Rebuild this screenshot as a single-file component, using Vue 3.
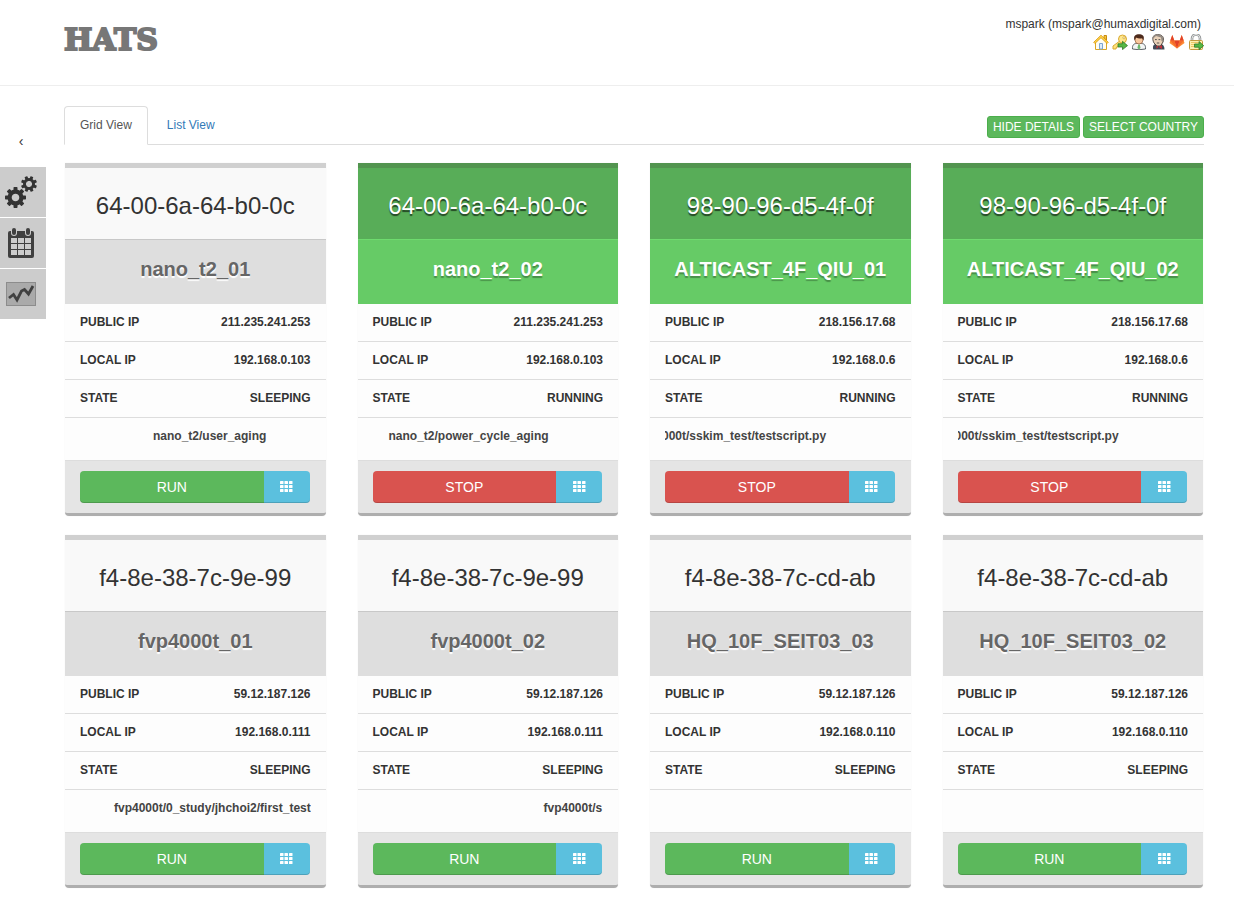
<script setup>
const cards = [
  { mac: '64-00-6a-64-b0-0c', name: 'nano_t2_01', publicIp: '211.235.241.253', localIp: '192.168.0.103', running: false, script: 'nano_t2/user_aging', scroll: 73 },
  { mac: '64-00-6a-64-b0-0c', name: 'nano_t2_02', publicIp: '211.235.241.253', localIp: '192.168.0.103', running: true, script: 'nano_t2/power_cycle_aging', scroll: 16 },
  { mac: '98-90-96-d5-4f-0f', name: 'ALTICAST_4F_QIU_01', publicIp: '218.156.17.68', localIp: '192.168.0.6', running: true, script: '000t/sskim_test/testscript.py', scroll: -3 },
  { mac: '98-90-96-d5-4f-0f', name: 'ALTICAST_4F_QIU_02', publicIp: '218.156.17.68', localIp: '192.168.0.6', running: true, script: '000t/sskim_test/testscript.py', scroll: -3 },
  { mac: 'f4-8e-38-7c-9e-99', name: 'fvp4000t_01', publicIp: '59.12.187.126', localIp: '192.168.0.111', running: false, script: 'fvp4000t/0_study/jhchoi2/first_test', scroll: 34 },
  { mac: 'f4-8e-38-7c-9e-99', name: 'fvp4000t_02', publicIp: '59.12.187.126', localIp: '192.168.0.111', running: false, script: 'fvp4000t/s', scroll: 171 },
  { mac: 'f4-8e-38-7c-cd-ab', name: 'HQ_10F_SEIT03_03', publicIp: '59.12.187.126', localIp: '192.168.0.110', running: false, script: '', scroll: 0 },
  { mac: 'f4-8e-38-7c-cd-ab', name: 'HQ_10F_SEIT03_02', publicIp: '59.12.187.126', localIp: '192.168.0.110', running: false, script: '', scroll: 0 },
]
const teeth = [0, 45, 90, 135, 180, 225, 270, 315]
</script>

<template>
  <div class="page">
    <header class="top">
      <a class="logo" href="#">HATS</a>
      <div class="account">
        <div class="user">mspark (mspark@humaxdigital.com)</div>
        <nav class="shortcuts">
          <a href="#" aria-label="Home">
            <svg viewBox="0 0 16 16">
              <path d="M2.5 8v7.5h11V8L8 3z" fill="#fffdf2" stroke="#dba626" />
              <path d="M11 1.5h2.500V6L11 4z" fill="#f6c83c" stroke="#c98a10" />
              <path d="M.7 8.300 8 1.200l7.300 7.100-1.200 1.200L8 3.700 1.900 9.500z" fill="#ffd84a" stroke="#d79312" stroke-width=".8" />
              <path d="M6.500 15V9.500h3V15z" fill="#dcebfa" stroke="#7ba6d3" />
            </svg>
          </a>
          <a href="#" aria-label="Change password">
            <svg viewBox="0 0 16 16">
              <path d="M7.500 7.200 1 12v3h3l.5-2H6l.5-2H8l2-1.500" fill="#ffe27a" stroke="#d9aa35" />
              <circle cx="10.500" cy="5" r="4" fill="#ffe78c" stroke="#d9aa35" />
              <circle cx="12" cy="3.800" r="1.100" fill="#fff" stroke="#c28e16" stroke-width=".6" />
              <path d="M6 9.800h4.500V7.300l5 4.300-5 4V13H6z" fill="#56b843" stroke="#32782a" stroke-width=".8" />
            </svg>
          </a>
          <a href="#" aria-label="Profile">
            <svg viewBox="0 0 16 16">
              <path d="M1.500 15c-.4-4 1.500-5.500 4-5.500h5c2.500 0 4.400 1.500 4 5.500q-6.500 1.500-13 0z" fill="#f3f5f5" stroke="#4d5358" stroke-width=".9" />
              <path d="M7.200 10.500h1.600l.8 3.500L8 15.500 6.400 14z" fill="#6cb96c" />
              <circle cx="8" cy="6" r="4" fill="#f8c89e" stroke="#7b4426" stroke-width=".6" />
              <path d="M3.500 6.500C2 1.500 5 .3 8 .3s6 1.200 4.500 6.200l-1.300-2.300Q8 5 5 3.600z" fill="#4d2a1b" />
            </svg>
          </a>
          <a href="#" aria-label="Jenkins">
            <svg viewBox="0 0 16 16">
              <path d="M3 14.500C2.500 12 4 10 6 10h4c3 0 4.500 2 4.500 5.500h-11z" fill="#414a57" />
              <path d="M4 9C1.500 4 3 .8 7.500.6c5-.2 7 3 5.500 7.400l-2.500 4H7z" fill="#ead2b9" stroke="#443d39" stroke-width=".9" />
              <path d="M2.600 5C2 1.500 5 .2 8 .4c4 .2 6.300 3 5.100 7.600L11.500 7 11 3.500 6 2z" fill="#948b83" />
              <path d="M5 5.600h1.800m1.700 0h1.800M6.800 9h2.500" stroke="#333" stroke-width=".8" />
              <path d="m8.500 12.800-2-1.300V15zm0 0 3.500-1.600v3.800z" fill="#c52e37" />
            </svg>
          </a>
          <a href="#" aria-label="GitLab">
            <svg viewBox="0 0 16 16">
              <path d="M8 14.500.5 9 3.300 1l2 5.500h5.400l2-5.500 2.800 8z" fill="#fc8a35" />
              <path d="M8 14.500 5.300 6.500h5.400z" fill="#e24329" />
              <path d="M8 14.500 1.300 6.600h4zM8 14.500l6.700-7.900h-4z" fill="#f46a2c" />
              <path d="m3.300 1 2 5.500h-4zM12.700 1l-2 5.500h4z" fill="#e24329" />
            </svg>
          </a>
          <a href="#" aria-label="Log out">
            <svg viewBox="0 0 16 16">
              <path d="M4 7V4.500a4 4 0 0 1 8 0V7" fill="none" stroke="#8f9293" stroke-width="2.600" />
              <path d="M4 7V4.500a4 4 0 0 1 8 0V7" fill="none" stroke="#e8eaea" stroke-width="1" />
              <rect x="1.500" y="6.500" width="13" height="9" rx="1" fill="#ffefb0" stroke="#c29a3e" />
              <path d="M3 8.500h10M3 10.500h10M3 12.500h10" stroke="#e7bd52" stroke-width=".8" />
              <path d="M6.500 10H11V7.500l4.700 4.200-4.700 4v-2.500H6.500z" fill="#56b843" stroke="#32782a" stroke-width=".8" />
            </svg>
          </a>
        </nav>
      </div>
    </header>

    <div class="body">
      <aside class="side">
        <button class="collapse" type="button" aria-label="Collapse menu">‹</button>
        <a class="tool" href="#" aria-label="Settings">
          <svg viewBox="0 0 46 50">
            <g transform="translate(15.500 30.500)" fill="#333">
              <rect v-for="a in teeth" :key="a" x="-2" y="-10.500" width="4" height="6" rx=".7" :transform="`rotate(${a})`" />
              <circle r="5.900" fill="none" stroke="#333" stroke-width="4.200" />
            </g>
            <g transform="translate(29 17)" fill="#333">
              <rect v-for="a in teeth" :key="a" x="-1.500" y="-8" width="3" height="5" rx=".5" :transform="`rotate(${a + 22})`" />
              <circle r="4.600" fill="none" stroke="#333" stroke-width="2.800" />
            </g>
          </svg>
        </a>
        <a class="tool" href="#" aria-label="Schedule">
          <svg viewBox="0 0 46 50">
            <rect x="8" y="13" width="26" height="27" rx="2" fill="#404040" />
            <path d="M11 20h6v5h-6zm7 0h6v5h-6zm7 0h6v5h-6zM11 26h6v5h-6zm7 0h6v5h-6zm7 0h6v5h-6zM11 32h6v5h-6zm7 0h6v5h-6zm7 0h6v5h-6z" fill="#ccc" />
            <rect x="11" y="9" width="6" height="9" rx="3" fill="#ccc" />
            <rect x="25" y="9" width="6" height="9" rx="3" fill="#ccc" />
            <rect x="12" y="10" width="4" height="7" rx="2" fill="#404040" />
            <rect x="26" y="10" width="4" height="7" rx="2" fill="#404040" />
          </svg>
        </a>
        <a class="tool" href="#" aria-label="Statistics">
          <svg viewBox="0 0 46 50">
            <rect x="6.500" y="13.500" width="29" height="23" fill="#aaa" stroke="#8c8c8c" />
            <path d="m9 29 4.500-3.500L17 31l4.500-9 3-1.500 4 4.500L33 17" fill="none" stroke="#404040" stroke-width="2.800" />
          </svg>
        </a>
      </aside>

      <main class="main">
        <div class="tabbar">
          <nav class="tabs">
            <a class="tab active" href="#">Grid View</a>
            <a class="tab" href="#">List View</a>
          </nav>
          <div class="actions">
            <button class="small" type="button">HIDE DETAILS</button>
            <button class="small" type="button">SELECT COUNTRY</button>
          </div>
        </div>

        <section class="grid">
          <article v-for="(c, i) in cards" :key="i" class="card" :class="{ running: c.running }">
            <h2 class="mac">{{ c.mac }}</h2>
            <h3 class="name">{{ c.name }}</h3>
            <dl class="details">
              <div class="row"><dt>PUBLIC IP</dt><dd>{{ c.publicIp }}</dd></div>
              <div class="row"><dt>LOCAL IP</dt><dd>{{ c.localIp }}</dd></div>
              <div class="row"><dt>STATE</dt><dd>{{ c.running ? 'RUNNING' : 'SLEEPING' }}</dd></div>
            </dl>
            <div class="script">
              <div class="ticker"><span :style="{ marginLeft: c.scroll + 'px' }">{{ c.script }}</span></div>
            </div>
            <footer class="foot">
              <button class="run" type="button">{{ c.running ? 'STOP' : 'RUN' }}</button>
              <button class="pick" type="button" aria-label="Choose script">
                <svg viewBox="0 0 13 12">
                  <g fill="#fff">
                    <template v-for="y in 3" :key="y">
                      <rect v-for="x in 3" :key="x" :x="(x - 1) * 4.500" :y="(y - 1) * 4" width="3.500" height="3" rx=".6" />
                    </template>
                  </g>
                </svg>
              </button>
            </footer>
          </article>
        </section>
      </main>
    </div>
  </div>
</template>

<style>
body {
  margin: 0;
  background: #fff;
}
</style>

<style scoped>
.page {
  font: 12px/20px "Liberation Sans", Arial, sans-serif;
  color: #333;
}
.page *,
.page {
  box-sizing: border-box;
}
a {
  text-decoration: none;
}
button {
  font-family: inherit;
  cursor: pointer;
}
svg {
  display: block;
}
.top {
  display: flex;
  justify-content: space-between;
  height: 86px;
  padding: 14px 30px 0 64px;
  border-bottom: 1px solid #eee;
}
.logo {
  font: bold 30px/52px "DejaVu Serif", serif;
  color: #777;
  -webkit-text-stroke: 2px #777;
}
.account {
  text-align: right;
}
.user {
  padding-right: 3px;
}
.shortcuts {
  display: flex;
  justify-content: flex-end;
  gap: 3px;
}
.shortcuts svg {
  width: 16px;
  height: 16px;
}
.body {
  display: flex;
}
.side {
  flex: 0 0 64px;
  padding-top: 45px;
}
.collapse {
  display: block;
  width: 42px;
  height: 20px;
  margin-bottom: 16px;
  padding: 0;
  border: 0;
  background: none;
  color: #333;
  font-size: 14px;
  line-height: 20px;
}
.tool {
  display: block;
  width: 46px;
  height: 50px;
  margin-bottom: 1px;
  background: #ccc;
}
.main {
  flex: 1;
  min-width: 0;
  padding: 20px 30px 14px 0;
}
.tabbar {
  display: flex;
  justify-content: space-between;
  border-bottom: 1px solid #ddd;
}
.tabs {
  display: flex;
  gap: 3px;
  margin-bottom: -1px;
}
.tab {
  padding: 8px 15px 9px;
  border: 1px solid transparent;
  border-radius: 4px 4px 0 0;
  color: #337ab7;
}
.tab.active {
  border-color: #ddd #ddd #fff;
  background: #fff;
  color: #555;
}
.actions {
  display: flex;
  align-items: flex-start;
  gap: 3px;
  padding-top: 10px;
}
.small {
  height: 22px;
  padding: 0 5px;
  border: 1px solid #4cae4c;
  border-radius: 3px;
  background: #5cb85c;
  color: #fff;
  font-size: 12px;
  line-height: 20px;
}
.grid {
  display: grid;
  grid-template-columns: repeat(4, minmax(0, 1fr));
  gap: 19px 32px;
  padding: 18px 1px 0;
}
.card {
  border-radius: 0 0 4px 4px;
  background: #fdfdfd;
  box-shadow: 0 0 2px rgba(0, 0, 0, 0.06);
}
.mac {
  height: 76px;
  margin: 0;
  padding-top: 22px;
  border-top: 5px solid #d0d0d0;
  background: #f9f9f9;
  font-size: 24px;
  font-weight: normal;
  line-height: 32px;
  text-align: center;
}
.name {
  height: 65px;
  margin: 0;
  padding-top: 16px;
  border-top: 1px solid #c8c8c8;
  background: #dedede;
  color: #666;
  font-size: 20px;
  line-height: 26px;
  text-align: center;
  text-shadow: 0 2px 1px #fff;
}
.running .mac {
  border-color: #52944f;
  background: #58ad58;
  color: #fff;
  text-shadow: 0 2px 1px rgba(0, 0, 0, 0.6);
}
.running .name {
  border-color: #6edb6e;
  background: #66cb66;
  color: #fff;
  text-shadow: 0 2px 1px rgba(0, 0, 0, 0.3);
}
.details {
  margin: 0;
  font-weight: bold;
}
.row {
  display: flex;
  justify-content: space-between;
  padding: 8px 15px 9px;
  border-bottom: 1px solid #ddd;
}
.row dd {
  margin: 0;
}
.script {
  height: 43px;
  padding: 8px 15px 0;
  border-bottom: 1px solid #ddd;
  font-weight: bold;
}
.ticker {
  overflow: hidden;
  white-space: nowrap;
  color: #444;
}
.foot {
  display: flex;
  padding: 10px 16px 10px 15px;
  border-bottom: 3px solid #aeaeae;
  border-radius: 0 0 4px 4px;
  background: #e5e5e5;
}
.run,
.pick {
  height: 32px;
  padding: 0;
  border: 0;
  color: #fff;
  font-size: 14px;
  box-shadow: inset 0 -1px 0 rgba(0, 0, 0, 0.16);
}
.run {
  flex: 4;
  border-radius: 4px 0 0 4px;
  background: #5cb85c;
}
.running .run {
  background: #d9534f;
}
.pick {
  display: flex;
  flex: 1;
  align-items: center;
  justify-content: center;
  border-radius: 0 4px 4px 0;
  background: #5bc0de;
}
.pick svg {
  width: 13px;
  height: 12px;
}
</style>
